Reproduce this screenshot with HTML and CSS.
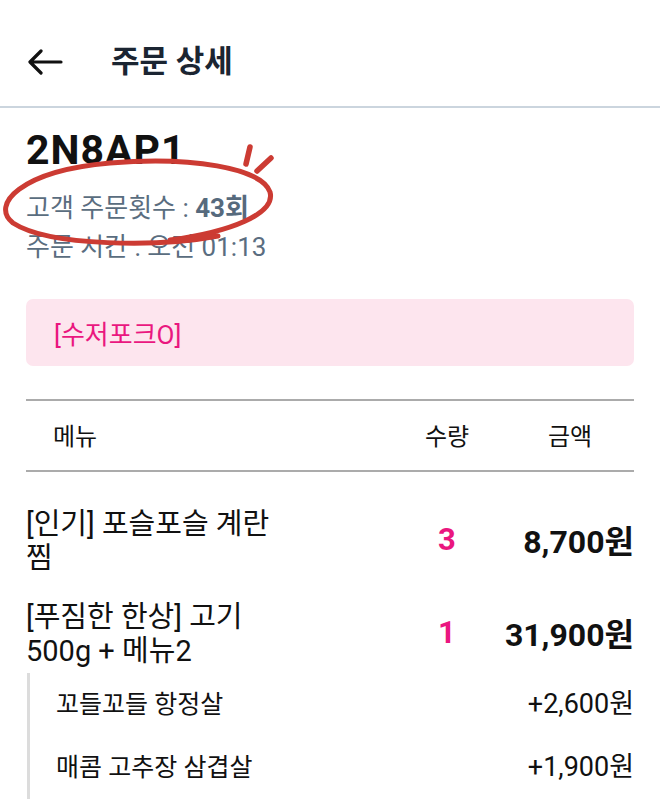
FILE: index.html
```html
<!DOCTYPE html>
<html lang="ko">
<head>
<meta charset="utf-8">
<title>주문 상세</title>
<link rel="stylesheet" href="styles.css">
</head>
<body>
<header class="topbar">
  <svg class="back" width="36" height="26" viewBox="0 0 36 26" aria-hidden="true">
    <path d="M34 13H4M14 2L3 13L14 24" fill="none" stroke="#111" stroke-width="3.2" stroke-linecap="round" stroke-linejoin="round"/>
  </svg>
  <h1 class="title">주문 상세</h1>
</header>
<main class="content">
  <section class="order-info">
    <div class="order-id">2N8AP1</div>
    <div class="info-line first">고객 주문횟수 : <b class="count">43회</b></div>
    <div class="info-line">주문 시간 : 오전 01:13</div>
    <svg class="circle-mark" width="290" height="130" viewBox="0 0 290 130" aria-hidden="true">
      <path d="M218 110 C160 121, 50 121, 13 97 C -10 79, 20 45, 110 37 C 190 30, 262 42, 270 66 C 276 88, 230 106, 170 114" fill="none" stroke="#cc3b33" stroke-width="5" stroke-linecap="round"/>
      <path d="M250 21 L246 38" stroke="#cc3b33" stroke-width="5.5" stroke-linecap="round"/>
      <path d="M271 32 L257 45" stroke="#cc3b33" stroke-width="5.5" stroke-linecap="round"/>
    </svg>
  </section>
  <div class="request">[수저포크O]</div>
  <div class="table-head">
    <span class="th th-menu">메뉴</span>
    <span class="th th-qty">수량</span>
    <span class="th th-price">금액</span>
  </div>
  <div class="rows">
    <div class="row">
      <div class="menu">[인기] 포슬포슬 계란찜</div>
      <div class="qty">3</div>
      <div class="price">8,700원</div>
    </div>
    <div class="row">
      <div class="menu">[푸짐한 한상] 고기 500g + 메뉴2</div>
      <div class="qty">1</div>
      <div class="price">31,900원</div>
    </div>
    <div class="options">
      <div class="option"><span class="opt-name">꼬들꼬들 항정살</span><span class="opt-price">+2,600원</span></div>
      <div class="option"><span class="opt-name">매콤 고추장 삼겹살</span><span class="opt-price">+1,900원</span></div>
    </div>
  </div>
</main>
</body>
</html>
```
FILE: styles.css
```css
* { box-sizing: border-box; }
html, body { margin: 0; padding: 0; background: #fff; }
body {
  font-family: Roboto, "Noto Sans CJK KR", sans-serif;
  color: #111;
  width: 660px;
  height: 800px;
  overflow: hidden;
}
.topbar {
  height: 108px;
  display: flex;
  align-items: center;
  padding-left: 27px;
  padding-top: 18px;
  border-bottom: 2px solid #cbd5de;
}
.back { display: block; }
.title {
  margin: 0 0 0 48px;
  font-size: 31px;
  line-height: 40px;
  font-weight: 700;
  color: #1b2532;
}
.content { padding: 0 26px; }
.order-info { position: relative; padding-top: 19px; }
.order-id {
  font-size: 41px;
  font-weight: 700;
  line-height: 46px;
  letter-spacing: 1px;
  color: #111;
}
.info-line {
  font-size: 26px;
  line-height: 39px;
  color: #5a6d80;
}
.info-line.first { margin-top: 16px; }
.count { font-weight: 700; color: #566a7d; }
.circle-mark {
  position: absolute;
  left: -26px;
  top: 18px;
  pointer-events: none;
}
.request {
  margin-top: 32px;
  height: 67px;
  display: flex;
  align-items: center;
  padding-left: 28px;
  background: #fde5ee;
  border-radius: 7px;
  font-size: 26px;
  color: #ea177f;
}
.table-head {
  margin-top: 33px;
  height: 73px;
  border-top: 2px solid #ababab;
  border-bottom: 2px solid #ababab;
  display: grid;
  grid-template-columns: 1fr 90px 142px;
  align-items: center;
  padding-bottom: 3px;
  font-size: 24px;
  color: #111;
}
.th-menu { padding-left: 27px; }
.th-qty { text-align: center; }
.th-price { text-align: center; padding-left: 14px; }
.rows { padding-top: 35px; }
.row {
  display: grid;
  grid-template-columns: 1fr 90px 142px;
  align-items: center;
  margin-bottom: 25px;
}
.row + .row { margin-bottom: 5px; }
.menu {
  font-size: 29px;
  line-height: 34px;
  max-width: 262px;
  color: #111;
}
.qty {
  text-align: center;
  font-size: 31px;
  font-weight: 700;
  color: #ea177f;
  padding-bottom: 4px;
}
.price {
  text-align: right;
  font-size: 32px;
  font-weight: 700;
  color: #111;
  padding-bottom: 4px;
}
.options {
  margin-left: 1px;
  border-left: 3px solid #dcdcdc;
}
.option {
  height: 63px;
  display: flex;
  align-items: center;
  justify-content: space-between;
  padding-left: 26px;
  padding-bottom: 6px;
  color: #111;
}
.opt-name { font-size: 25px; }
.opt-price { font-size: 27px; }
```
